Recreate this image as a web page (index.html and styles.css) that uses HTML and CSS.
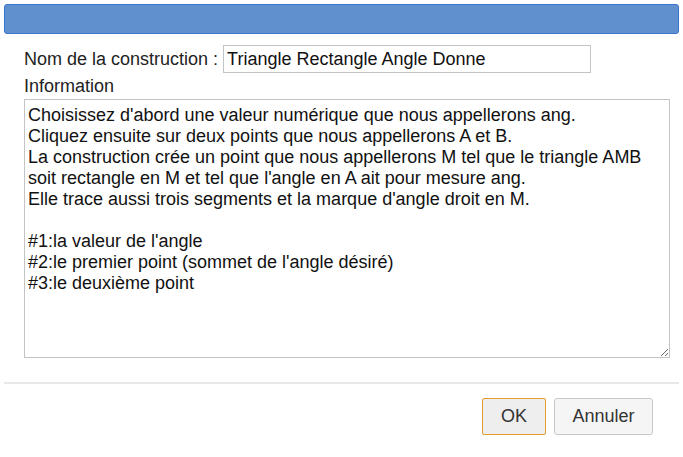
FILE: index.html
```html
<!DOCTYPE html>
<html lang="fr">
<head>
<meta charset="utf-8">
<title>Construction</title>
<link rel="stylesheet" href="styles.css">
</head>
<body>
<div class="dialog">
  <div class="titlebar"></div>
  <div class="content">
    <div class="name-row">
      <label class="label" for="nom">Nom de la construction :</label>
      <input id="nom" class="name-input" type="text" value="Triangle Rectangle Angle Donne">
    </div>
    <div class="info-label">Information</div>
    <textarea class="info">Choisissez d'abord une valeur numérique que nous appellerons ang.
Cliquez ensuite sur deux points que nous appellerons A et B.
La construction crée un point que nous appellerons M tel que le triangle AMB soit rectangle en M et tel que l'angle en A ait pour mesure ang.
Elle trace aussi trois segments et la marque d'angle droit en M.

#1:la valeur de l'angle
#2:le premier point (sommet de l'angle désiré)
#3:le deuxième point</textarea>
  </div>
  <div class="separator"></div>
  <div class="buttons">
    <button class="btn btn-ok">OK</button>
    <button class="btn">Annuler</button>
  </div>
</div>
</body>
</html>
```
FILE: styles.css
```css
* { box-sizing: border-box; }
html, body {
  margin: 0;
  padding: 0;
  background: #ffffff;
}
body {
  font-family: "Liberation Sans", Arial, sans-serif;
  font-size: 18px;
  color: #222;
  width: 683px;
  height: 457px;
  overflow: hidden;
}
.dialog {
  padding: 4px 4px 0 4px;
}
.titlebar {
  height: 30px;
  background: #6190cf;
  border: 1px solid #3b74cc;
  border-radius: 3px;
}
.content {
  padding: 11px 10px 0 20px;
}
.name-row {
  display: flex;
  align-items: center;
  height: 28px;
}
.label {
  font-size: 18px;
  color: #222;
  margin-right: 5px;
  line-height: 21px;
}
.name-input {
  width: 368px;
  height: 28px;
  border: 1px solid #c4c4c4;
  padding: 0 3px;
  font-family: "Liberation Sans", Arial, sans-serif;
  font-size: 18px;
  color: #111;
  background: #fff;
  outline: none;
}
.info-label {
  margin-top: 3px;
  margin-bottom: 2px;
  line-height: 21px;
  color: #222;
}
.info {
  display: block;
  width: 646px;
  height: 259px;
  border: 1px solid #c4c4c4;
  padding: 5px 3px 3px 3px;
  font-family: "Liberation Sans", Arial, sans-serif;
  font-size: 18px;
  line-height: normal;
  color: #111;
  background: #fff;
  resize: both;
  outline: none;
}
.separator {
  height: 2px;
  background: #e8e8e8;
  margin-top: 24px;
}
.buttons {
  display: flex;
  justify-content: flex-end;
  gap: 8px;
  padding: 14px 26px 0 0;
}
.btn {
  height: 37px;
  font-family: "Liberation Sans", Arial, sans-serif;
  font-size: 18px;
  color: #333;
  background: #f5f5f5;
  border: 1px solid #c8c8c8;
  border-radius: 3px;
  padding: 0;
  width: 99px;
}
.btn-ok {
  width: 64px;
  background: #eeeeee;
  border-color: #e39b2e;
  border-radius: 2px;
}
```
